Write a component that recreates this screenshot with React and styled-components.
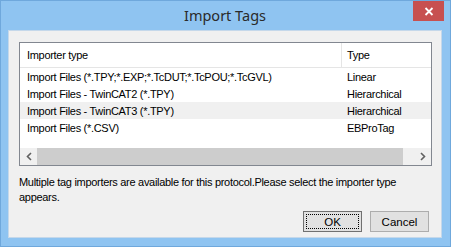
import React from "react";
import styled, { createGlobalStyle } from "styled-components";

const Global = createGlobalStyle`
  html, body { margin: 0; padding: 0; background: #8fc4f1; }
  * { box-sizing: border-box; }
`;

const Frame = styled.div`
  width: 451px;
  height: 247px;
  background: #8fc4f1;
  border: 1px solid #6fa8dc;
  display: flex;
  flex-direction: column;
  padding: 0 8px 8px 7px;
  font-family: "Liberation Sans", Arial, sans-serif;
`;

const TitleBar = styled.div`
  height: 29px;
  flex: none;
  position: relative;
  display: flex;
  align-items: center;
  justify-content: center;
  font-family: "Noto Sans", "Open Sans", sans-serif;
  font-size: 14.5px;
  color: #2a2a2a;
  padding-bottom: 1px;
`;

const CloseBtn = styled.div`
  position: absolute;
  right: -2px;
  top: 0;
  width: 31px;
  height: 20px;
  background: #c75050;
  display: flex;
  align-items: center;
  justify-content: center;
`;

const Client = styled.div`
  flex: 1;
  background: #f0f0f0;
  border: 1px solid #c5d8ea;
  padding: 11px 9px 0 10px;
  display: flex;
  flex-direction: column;
`;

const ListBox = styled.div`
  height: 124px;
  flex: none;
  background: #fff;
  border: 1px solid #828790;
  display: flex;
  flex-direction: column;
  font-size: 11px;
  letter-spacing: -0.3px;
  color: #000;
`;

const Row = styled.div`
  display: grid;
  grid-template-columns: 322px 1fr;
  height: ${(p) => (p.$header ? "25px" : "17px")};
  align-items: center;
  background: ${(p) => (p.$hover ? "#f0f0f0" : "#fff")};
  border-bottom: ${(p) => (p.$header ? "1px solid #e5e5e5" : "none")};
`;

const Cell = styled.div`
  padding-left: ${(p) => (p.$first ? "7px" : "5px")};
  height: 100%;
  display: flex;
  align-items: center;
  white-space: nowrap;
  overflow: hidden;
  border-right: ${(p) => (p.$divider ? "1px solid #e5e5e5" : "none")};
`;

const Spacer = styled.div`
  flex: 1;
`;

const HScroll = styled.div`
  height: 17px;
  display: flex;
  background: #f0f0f0;
  align-items: stretch;
`;

const Arrow = styled.div`
  width: ${(p) => p.$w}px;
  display: flex;
  align-items: center;
  justify-content: ${(p) => (p.$right ? "flex-end" : "center")};
  padding-right: ${(p) => (p.$right ? "5px" : "0")};
`;

const Thumb = styled.div`
  flex: 1;
  background: #cdcdcd;
`;

const Message = styled.div`
  margin-top: 9px;
  font-size: 11px;
  letter-spacing: -0.3px;
  line-height: 15px;
  color: #000;
  white-space: nowrap;
`;

const Buttons = styled.div`
  margin-top: auto;
  margin-bottom: 5px;
  display: flex;
  justify-content: flex-end;
  gap: 8px;
  padding-right: 3px;
`;

const Button = styled.button`
  width: 59px;
  height: 21px;
  font-family: "Liberation Sans", Arial, sans-serif;
  font-size: 11.5px;
  color: #000;
  background: #e1e1e1;
  border: 1px solid ${(p) => (p.$default ? "#707070" : "#adadad")};
  padding: 0;
  position: relative;
  &::after {
    content: "";
    display: ${(p) => (p.$default ? "block" : "none")};
    position: absolute;
    inset: 2px;
    border: 1px dotted #000;
  }
`;

const rows = [
  ["Import Files (*.TPY;*.EXP;*.TcDUT;*.TcPOU;*.TcGVL)", "Linear"],
  ["Import Files - TwinCAT2 (*.TPY)", "Hierarchical"],
  ["Import Files - TwinCAT3 (*.TPY)", "Hierarchical"],
  ["Import Files (*.CSV)", "EBProTag"],
];

const Chevron = ({ dir }) => (
  <svg width="6" height="9" viewBox="0 0 6 9">
    <path
      d={dir === "left" ? "M5 1 L1.5 4.5 L5 8" : "M1 1 L4.5 4.5 L1 8"}
      fill="none"
      stroke="#606060"
      strokeWidth="1.6"
    />
  </svg>
);

export default function App() {
  return (
    <>
      <Global />
      <Frame>
        <TitleBar>
          Import Tags
          <CloseBtn>
            <svg width="10" height="9" viewBox="0 0 10 9">
              <path d="M1.5 1 L8.5 8 M8.5 1 L1.5 8" stroke="#fff" strokeWidth="1.8" />
            </svg>
          </CloseBtn>
        </TitleBar>
        <Client>
          <ListBox>
            <Row $header>
              <Cell $first $divider>Importer type</Cell>
              <Cell>Type</Cell>
            </Row>
            {rows.map(([name, type], i) => (
              <Row key={name} $hover={i === 2}>
                <Cell $first>{name}</Cell>
                <Cell>{type}</Cell>
              </Row>
            ))}
            <Spacer />
            <HScroll>
              <Arrow $w={17}>
                <Chevron dir="left" />
              </Arrow>
              <Thumb />
              <Arrow $w={28} $right>
                <Chevron dir="right" />
              </Arrow>
            </HScroll>
          </ListBox>
          <Message>
            Multiple tag importers are available for this protocol.Please select the importer type
            <br />
            appears.
          </Message>
          <Buttons>
            <Button $default>OK</Button>
            <Button>Cancel</Button>
          </Buttons>
        </Client>
      </Frame>
    </>
  );
}
